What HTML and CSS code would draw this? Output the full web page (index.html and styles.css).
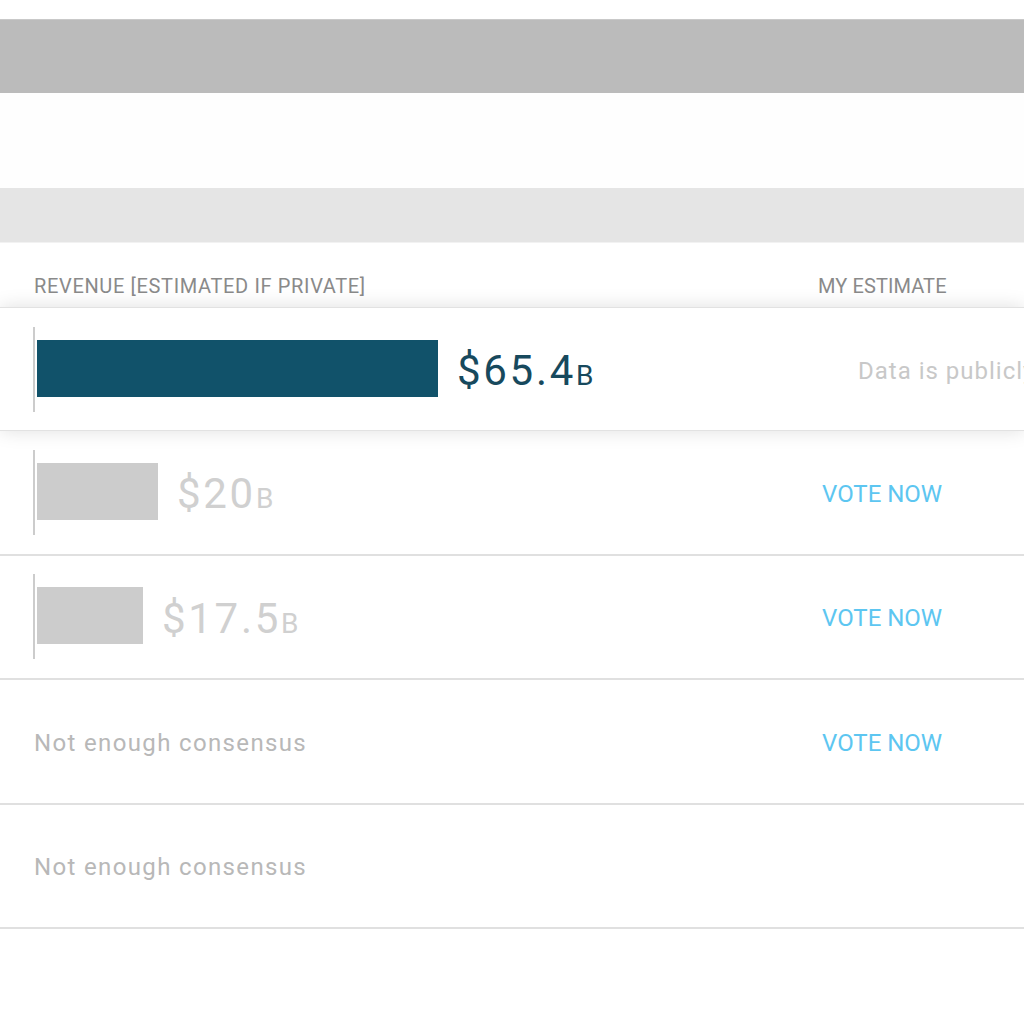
FILE: index.html
```html
<!DOCTYPE html>
<html>
<head>
<meta charset="utf-8">
<link rel="stylesheet" href="styles.css">
</head>
<body>
<div class="page">
  <div class="topbar"></div>
  <div class="gap"></div>
  <div class="subbar"></div>
  <div class="table">
    <div class="thead">
      <div class="th">REVENUE [ESTIMATED IF PRIVATE]</div>
      <div class="th th-est">MY ESTIMATE</div>
    </div>
    <div class="row row-active">
      <div class="cell-chart">
        <div class="axis"></div>
        <div class="bar bar-dark" style="width:401px"></div>
        <div class="value value-dark">$65.4<span class="unit">B</span></div>
      </div>
      <div class="cell-est"><span class="public">Data is publicly available</span></div>
    </div>
    <div class="row">
      <div class="cell-chart">
        <div class="axis"></div>
        <div class="bar bar-light" style="width:121px"></div>
        <div class="value value-light">$20<span class="unit">B</span></div>
      </div>
      <div class="cell-est"><span class="vote">VOTE NOW</span></div>
    </div>
    <div class="row">
      <div class="cell-chart">
        <div class="axis"></div>
        <div class="bar bar-light" style="width:106px"></div>
        <div class="value value-light">$17.5<span class="unit">B</span></div>
      </div>
      <div class="cell-est"><span class="vote">VOTE NOW</span></div>
    </div>
    <div class="row">
      <div class="cell-chart">
        <span class="none">Not enough consensus</span>
      </div>
      <div class="cell-est"><span class="vote">VOTE NOW</span></div>
    </div>
    <div class="row">
      <div class="cell-chart">
        <span class="none">Not enough consensus</span>
      </div>
      <div class="cell-est"></div>
    </div>
  </div>
</div>
</body>
</html>
```

FILE: styles.css
```css
html, body {
  margin: 0;
  padding: 0;
  background: #ffffff;
  overflow: hidden;
}
body {
  font-family: Roboto, "Liberation Sans", sans-serif;
}
.page {
  width: 1024px;
  overflow: hidden;
  padding-top: 19px;
}
.topbar {
  height: 73px;
  background: #bbbbbb;
  border-top: 1px solid #c9c9c9;
}
.gap {
  height: 95px;
  background: #fefefe;
}
.subbar {
  height: 54px;
  background: #e5e5e5;
  border-bottom: 1px solid #f2f2f2;
}
.table {
  display: flex;
  flex-direction: column;
}
.thead {
  display: grid;
  grid-template-columns: 784px 1fr;
  padding-left: 34px;
  height: 64px;
  align-items: end;
  box-sizing: border-box;
  padding-bottom: 11px;
}
.th {
  font-size: 20px;
  color: #8a8a8a;
  letter-spacing: 0.65px;
  line-height: 20px;
  white-space: nowrap;
}
.th-est {
  letter-spacing: 0.1px;
}
.row {
  display: grid;
  grid-template-columns: 784px 1fr;
  padding-left: 34px;
  height: 124.5px;
  box-sizing: border-box;
  border-bottom: 2px solid #e0e0e0;
  align-items: center;
  background: #ffffff;
}
.row-active {
  position: relative;
  z-index: 1;
  height: 124px;
  border-top: 1px solid #e2e2e2;
  border-bottom: 1px solid #e2e2e2;
  box-shadow: 0 0 18px rgba(0, 0, 0, 0.13);
}
.cell-chart {
  display: flex;
  align-items: center;
  height: 100%;
}
.axis {
  width: 2px;
  height: 85px;
  background: #cccccc;
  margin-left: -1px;
  margin-right: 2px;
}
.bar {
  height: 57px;
  margin-top: -2px;
}
.bar-dark {
  background: #11526a;
}
.bar-light {
  background: #cccccc;
}
.value {
  margin-left: 19px;
  font-size: 42px;
  letter-spacing: 2.7px;
  white-space: nowrap;
  line-height: 1;
  margin-top: 4px;
}
.unit {
  font-size: 28px;
  letter-spacing: 0;
  margin-left: 0;
}
.value-dark {
  color: #17495d;
}
.value-light {
  color: #d0d0d0;
}
.cell-est {
  white-space: nowrap;
  display: flex;
  align-items: center;
  margin-top: 3px;
}
.vote {
  margin-left: 4px;
  font-size: 24px;
  color: #5dc6f1;
}
.public {
  margin-left: 40px;
  font-size: 24px;
  color: #c8c8c8;
  letter-spacing: 1px;
}
.none {
  font-size: 24px;
  color: #b8b8b8;
  letter-spacing: 1.35px;
  margin-top: 3px;
}
```
